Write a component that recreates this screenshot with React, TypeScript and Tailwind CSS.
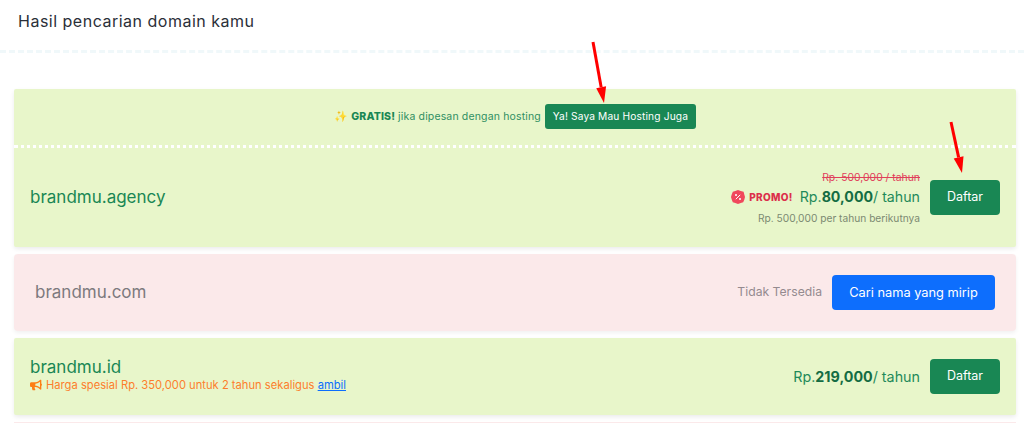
import { FaBullhorn } from 'react-icons/fa';

const sans = 'font-["Inter","Liberation_Sans",sans-serif]';

function Arrow({ className, x1, y1, x2, y2 }: { className: string; x1: number; y1: number; x2: number; y2: number }) {
  // arrow head drawn along the line direction
  const a = Math.atan2(y2 - y1, x2 - x1);
  const bx = x2 - Math.cos(a) * 16;
  const by = y2 - Math.sin(a) * 16;
  const nx = -Math.sin(a) * 5;
  const ny = Math.cos(a) * 5;
  return (
    <svg className={className} width="1024" height="423" viewBox="0 0 1024 423">
      <line x1={x1} y1={y1} x2={bx} y2={by} stroke="#ff0000" strokeWidth="3" />
      <polygon points={`${x2},${y2} ${bx + nx},${by + ny} ${bx - nx},${by - ny}`} fill="#ff0000" />
    </svg>
  );
}

function DaftarButton() {
  return (
    <button className="flex h-[35px] w-[70px] items-center justify-center rounded-[4px] bg-[#198754] text-[12.5px] text-white">
      Daftar
    </button>
  );
}

export default function App() {
  return (
    <div className={`relative h-[423px] w-[1024px] overflow-hidden bg-white ${sans}`}>
      {/* Heading */}
      <div className="h-[53px] border-b-[3px] border-dashed border-[#f0f8fa] pl-[18px] pt-[10px]">
        <h1 className="text-[16px] leading-[22px] tracking-[0.5px] text-[#2b2f38]">Hasil pencarian domain kamu</h1>
      </div>

      <div className="flex flex-col gap-[7px] pl-[14px] pr-[8px] pt-[36px]">
        {/* Available with promo */}
        <div className="h-[158px] rounded-[2px] bg-[#e8f6ca] shadow-[0_2px_4px_rgba(0,0,0,0.08)]">
          <div className="flex h-[59px] items-center justify-center gap-[3px] border-b-[3px] border-dotted border-white pb-[1px] text-[10.5px] tracking-[0.15px] text-[#2f8f62]">
            <span className="text-[11px] text-[#fbbf3c]">✨</span>
            <b className="font-extrabold text-[#198754]">GRATIS!</b>
            <span>jika dipesan dengan hosting</span>
            <button className="ml-[1px] flex h-[25px] w-[151px] items-center justify-center rounded-[3px] bg-[#198754] text-[10.2px] text-white">
              Ya! Saya Mau Hosting Juga
            </button>
          </div>
          <div className="flex h-[99px] items-center justify-between pl-4 pr-4">
            <div className="text-[17px] text-[#198754]">brandmu.agency</div>
            <div className="flex items-center gap-[10px]">
              <div className="flex flex-col items-end pt-[2px]">
                <div className="text-[10.4px] leading-[14px] text-[#e0405a] line-through">Rp. 500,000 / tahun</div>
                <div className="flex items-center leading-[24px]">
                  <svg width="14" height="14" viewBox="0 0 14 14" className="mr-[4px]">
                    <polygon
                      points="7,0 9.7,1.1 12.6,1.8 13.3,4.5 14,7 13.3,9.7 12.2,12.2 9.7,13 7,14 4.3,13 1.8,12.2 0.8,9.7 0,7 0.8,4.3 1.8,1.8 4.3,1"
                      fill="#f0485c"
                    />
                    <line x1="4.8" y1="9.2" x2="9.2" y2="4.8" stroke="#fff" strokeWidth="1" />
                    <circle cx="5" cy="5" r="1" fill="#fff" />
                    <circle cx="9" cy="9" r="1" fill="#fff" />
                  </svg>
                  <b className="mr-[7px] text-[10px] font-extrabold tracking-[0.3px] text-[#dc2f4b]">PROMO!</b>
                  <span className="text-[14.2px] text-[#1f8a5a]">
                    Rp.<b className="font-bold text-[#146c43]">80,000</b>/ tahun
                  </span>
                </div>
                <div className="text-[10.2px] leading-[18px] text-[#7c8a72]">Rp. 500,000 per tahun berikutnya</div>
              </div>
              <DaftarButton />
            </div>
          </div>
        </div>

        {/* Not available */}
        <div className="flex h-[77px] items-center justify-between rounded-[4px] bg-[#fbe9ea] pl-[21px] pr-[21px] shadow-[0_2px_4px_rgba(0,0,0,0.06)]">
          <div className="text-[17px] text-[#7d7a7e]">brandmu.com</div>
          <div className="flex items-center gap-[10px]">
            <span className="text-[12.2px] text-[#948a8f]">Tidak Tersedia</span>
            <button className="flex h-[35px] w-[163px] items-center justify-center rounded-[4px] bg-[#0d6efd] text-[12.8px] text-white">
              Cari nama yang mirip
            </button>
          </div>
        </div>

        {/* Available with offer */}
        <div className="flex h-[77px] items-center justify-between rounded-[2px] bg-[#e8f6ca] pl-4 pr-4 shadow-[0_2px_4px_rgba(0,0,0,0.08)]">
          <div className="pb-[3px]">
            <div className="text-[17px] leading-[20px] text-[#198754]">brandmu.id</div>
            <div className="flex items-center gap-[4px] text-[11.2px] leading-[16px] text-[#fd7e2c]">
              <FaBullhorn size={12} className="text-[#fd7e14]" />
              <span>
                Harga spesial Rp. 350,000 untuk 2 tahun sekaligus{' '}
                <a className="text-[#0d6efd] underline">ambil</a>
              </span>
            </div>
          </div>
          <div className="flex items-center gap-[10px]">
            <span className="text-[14.3px] text-[#1f8a5a]">
              Rp.<b className="font-bold text-[#146c43]">219,000</b>/ tahun
            </span>
            <DaftarButton />
          </div>
        </div>

        <div className="h-px bg-[#fbe9ea]" />
      </div>

      <Arrow className="absolute left-0 top-0" x1={593} y1={42} x2={604} y2={103} />
      <Arrow className="absolute left-0 top-0" x1={951} y1={122} x2={962} y2={173} />
    </div>
  );
}
